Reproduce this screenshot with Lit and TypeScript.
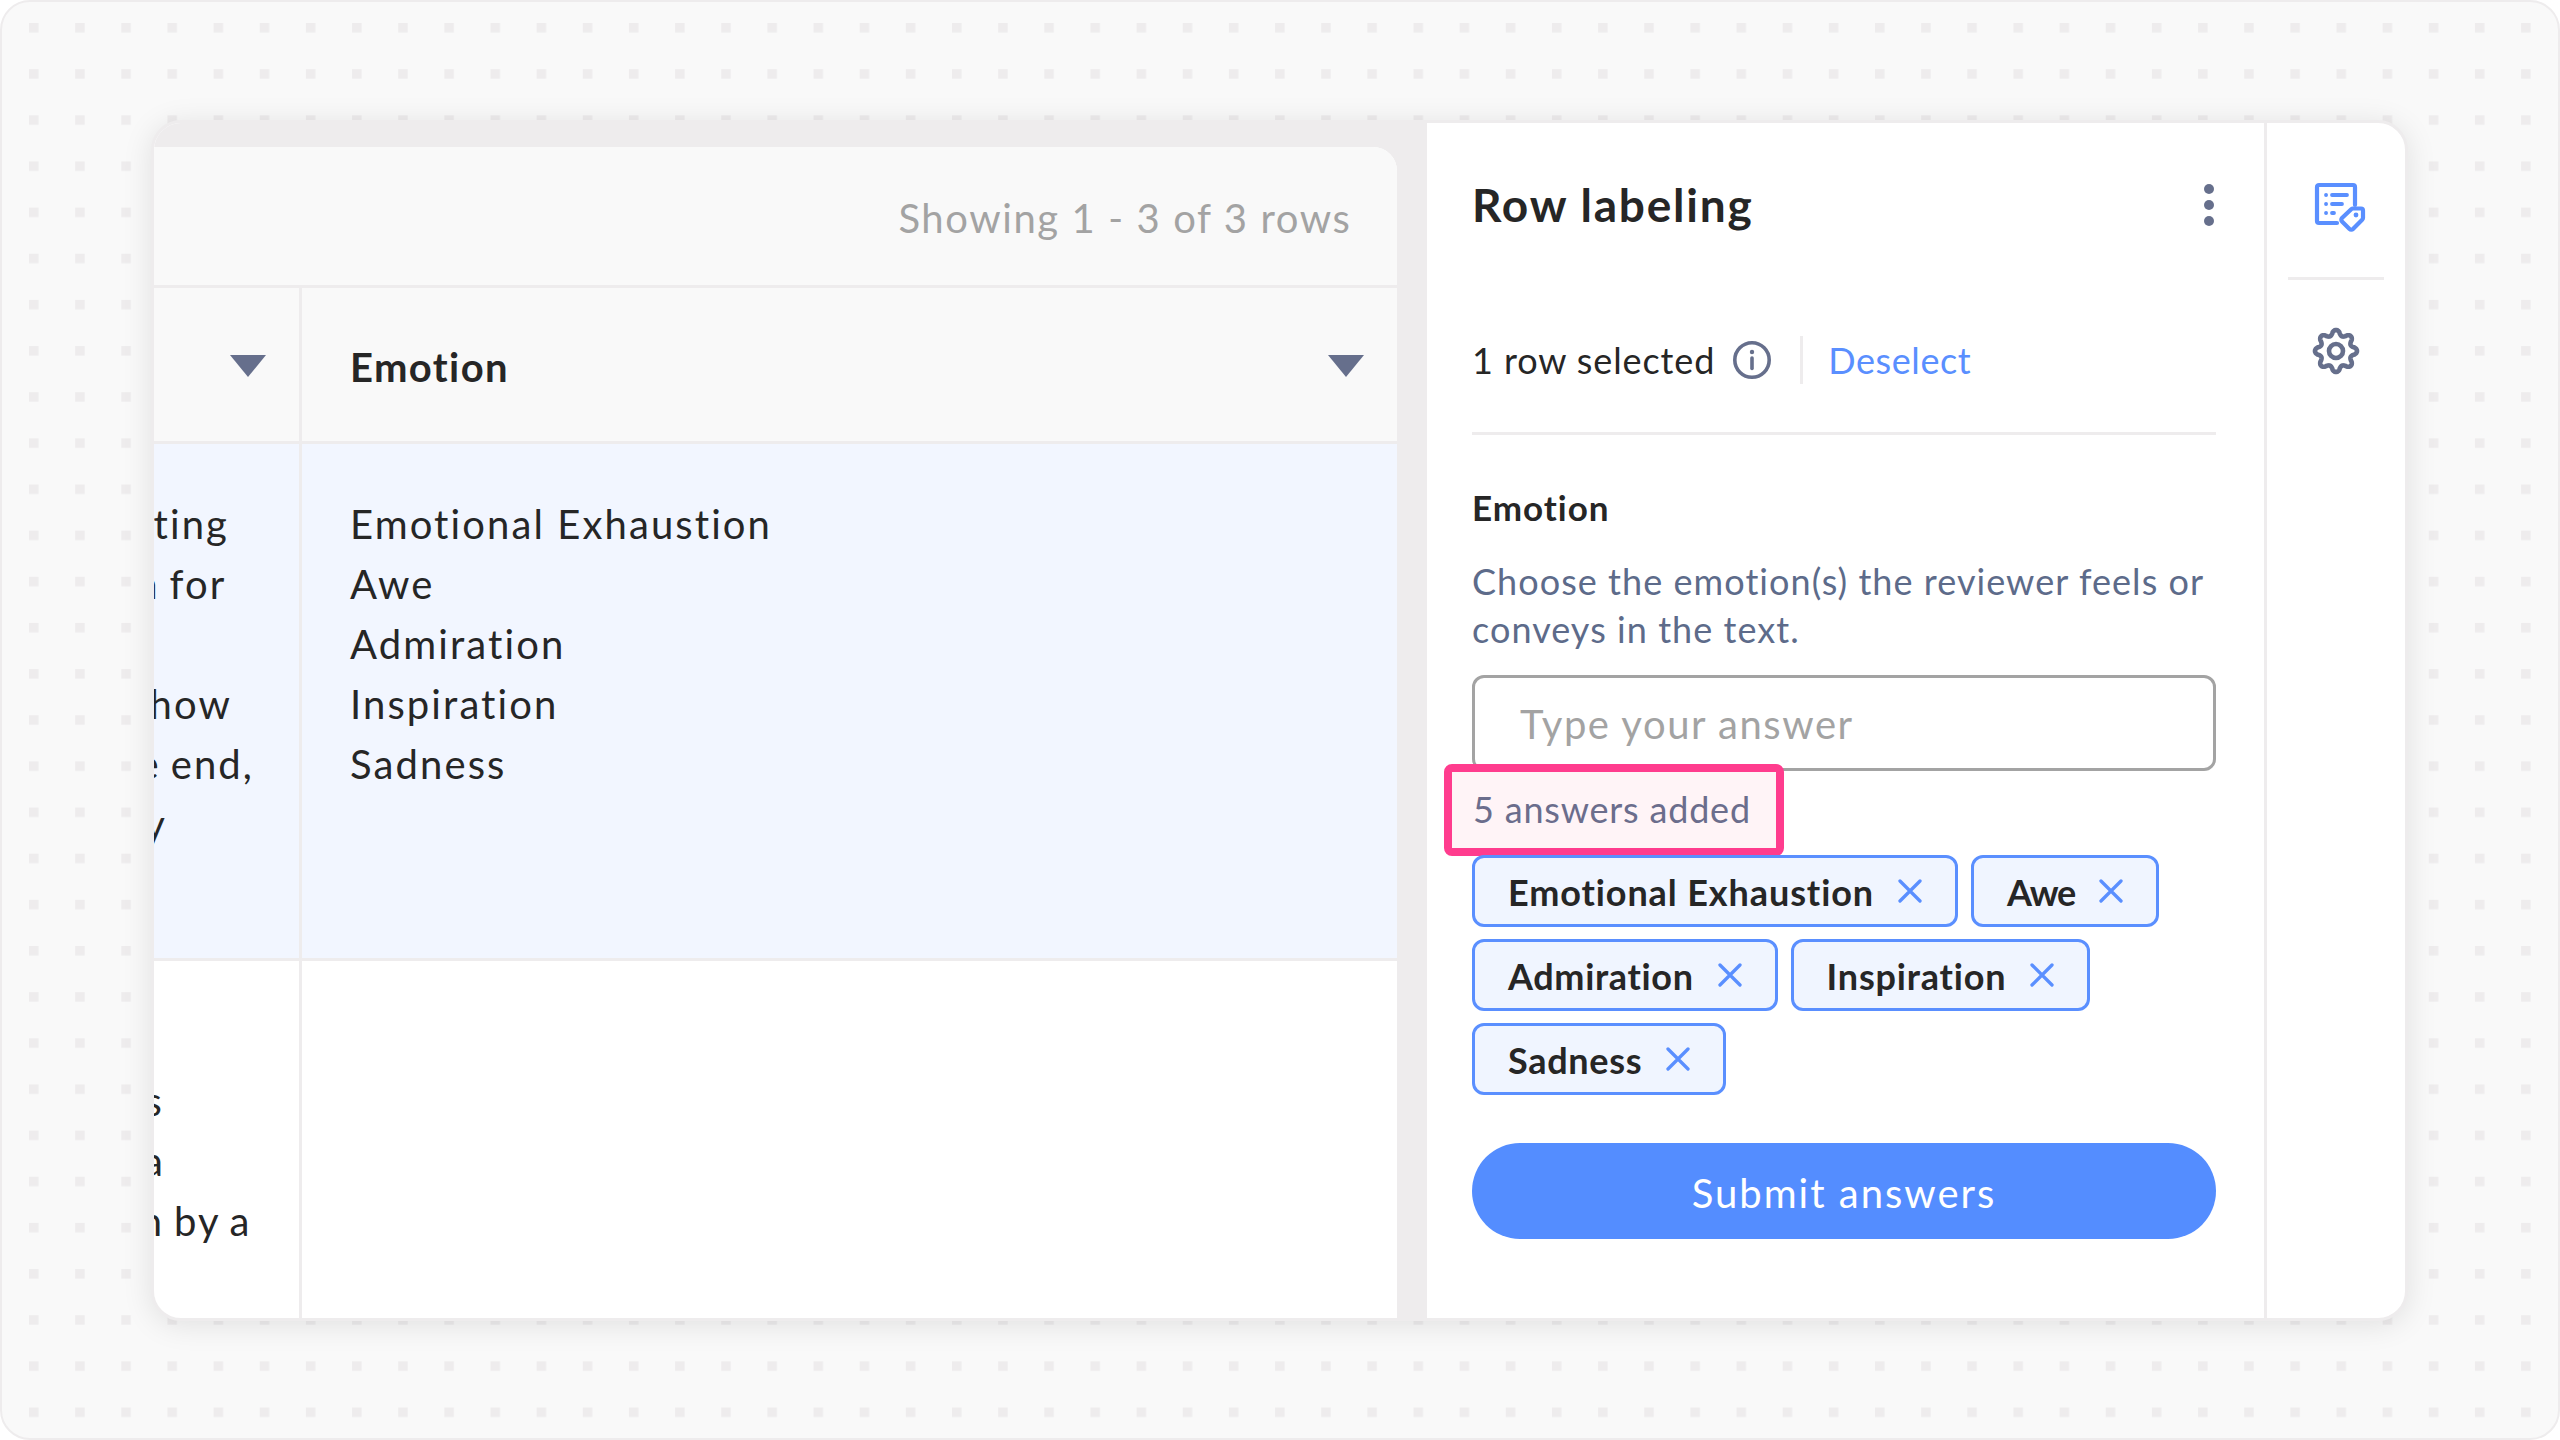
import { LitElement, html, css } from "lit";
import { customElement } from "lit/decorators.js";

const gearPath = (() => {
  const pts: string[] = [];
  const n = 240;
  for (let i = 0; i < n; i++) {
    const t = (i / n) * Math.PI * 2;
    const c = Math.cos(8 * t);
    const s = Math.sign(c) * Math.pow(Math.abs(c), 0.75);
    const r = 18.4 + 2.6 * s;
    pts.push(`${(30 + r * Math.sin(t)).toFixed(2)} ${(30 - r * Math.cos(t)).toFixed(2)}`);
  }
  return "M" + pts.join("L") + "Z";
})();

const firstColumn = [
  { text: "rating", inset: 70 },
  { text: "on for", inset: 72.5 },
  { text: "", inset: 0 },
  { text: "how", inset: 67 },
  { text: "the end,", inset: 45 },
  { text: "very", inset: 132 },
];
const secondRow = [
  { text: "", inset: 0 },
  { text: "was", inset: 135 },
  { text: "a", inset: 134 },
  { text: "shown by a", inset: 47.5 },
];
const emotions = ["Emotional Exhaustion", "Awe", "Admiration", "Inspiration", "Sadness"];
const chips = [
  { text: "Emotional Exhaustion", tracking: 0.9 },
  { text: "Awe", tracking: -1.2 },
  { text: "Admiration", tracking: 0.65 },
  { text: "Inspiration", tracking: 0.8 },
  { text: "Sadness", tracking: 0.7 },
];

@customElement("app-root")
export class AppRoot extends LitElement {
  static styles = css`
    :host {
      display: block;
      width: 2560px;
      height: 1440px;
      font-family: "Lato", "Noto Sans", sans-serif;
      color: #262626;
      background: #fff;
    }
    * { box-sizing: border-box; }
    .frame {
      position: relative;
      width: 2560px;
      height: 1440px;
      border: 2px solid #eeeced;
      border-radius: 30px;
      background: #f9f9f9;
      padding: 118px 150px 117px 149px;
      overflow: hidden;
    }
    .dots { position: absolute; left: -2px; top: -2px; width: 2560px; height: 1440px; }
    .card {
      position: relative;
      height: 100%;
      display: flex;
      border: 3px solid #eeeced;
      border-radius: 30px;
      background: #fff;
      overflow: hidden;
      box-shadow: 0 4px 30px rgba(0, 0, 0, 0.1);
    }
    .left {
      width: 1273px;
      flex: none;
      background: #eeeced;
      padding: 24px 30px 0 0;
    }
    .table {
      height: 100%;
      background: #fff;
      border-top-right-radius: 24px;
      overflow: hidden;
      display: flex;
      flex-direction: column;
    }
    .bar {
      height: 141px;
      flex: none;
      background: #f9f9f9;
      border-bottom: 3px solid #eeeced;
      display: flex;
      justify-content: flex-end;
      align-items: center;
      padding: 3px 45.5px 0 0;
      font-size: 40px;
      letter-spacing: 1.6px;
      color: #a3a3a3;
    }
    .row { display: flex; flex: none; border-bottom: 3px solid #eeeced; }
    .row.head { height: 156px; background: #f9f9f9; }
    .row.sel { height: 517px; background: #f2f6ff; }
    .row.last { flex: 1; border-bottom: 0; }
    .c1 {
      width: 148px;
      flex: none;
      border-right: 3px solid #eeeced;
      overflow: hidden;
    }
    .c2 { flex: 1; min-width: 0; }
    .head .c1, .head .c2 {
      display: flex;
      align-items: center;
      justify-content: flex-end;
      padding-right: 33px;
    }
    .head .c2 { justify-content: space-between; padding-left: 48px; }
    .head .name { font-size: 40px; font-weight: 700; letter-spacing: 1.4px; margin-top: 4px; }
    .tri {
      width: 0;
      height: 0;
      margin-top: 3px;
      border-left: 18px solid transparent;
      border-right: 18px solid transparent;
      border-top: 22px solid #666f8c;
    }
    .body { padding-top: 50px; font-size: 40px; line-height: 60px; letter-spacing: 2.1px; }
    .sel .c2, .last .c2 { padding-left: 48px; }
    .clip { display: flex; justify-content: flex-end; white-space: nowrap; height: 60px; word-spacing: -2.5px; }
    .clip span { flex: none; }
    .panel {
      width: 837px;
      flex: none;
      padding: 52px 48px 0 45px;
      display: flex;
      flex-direction: column;
    }
    .title-row { display: flex; justify-content: space-between; align-items: center; height: 60px; }
    h1 { margin: 0; font-size: 46px; line-height: 60px; font-weight: 700; letter-spacing: 1.8px; }
    .kebab { display: flex; flex-direction: column; gap: 6px; margin-right: 2px; }
    .kebab i { display: block; width: 10px; height: 10px; border-radius: 50%; background: #666f8c; }
    .selected { margin-top: 101px; height: 48px; display: flex; align-items: center; font-size: 36px; letter-spacing: 0.9px; }
    .selected svg { width: 38px; height: 38px; margin-left: 18px; flex: none; }
    .vr { width: 3px; height: 48px; background: #eeeced; margin: 0 25px 0 29px; flex: none; }
    .link { color: #5a8fff; letter-spacing: 0.6px; }
    .rule { margin-top: 48px; height: 3px; background: #eeeced; flex: none; }
    h2 { margin: 48px 0 0; font-size: 35px; line-height: 48px; font-weight: 700; letter-spacing: 1px; }
    .desc { margin: 26px 0 0; font-size: 36px; line-height: 48px; letter-spacing: 1.05px; color: #5d6b8a; }
    .input {
      margin-top: 22px;
      height: 96px;
      flex: none;
      width: 100%;
      border: 3px solid #a3a3a3;
      border-radius: 12px;
      padding: 2px 0 0 45px;
      font: 400 40px "Lato", sans-serif;
      letter-spacing: 1.55px;
      background: #fff;
      outline: none;
    }
    .input::placeholder { color: #a3a3a3; opacity: 1; }
    .added {
      position: relative;
      margin: -7px 0 0 -28px;
      width: 340px;
      height: 92px;
      flex: none;
      border: 8px solid #ff3c8e;
      border-radius: 8px;
      background: #fff4f7;
      display: flex;
      align-items: center;
      padding: 0 0 2px 21px;
      font-size: 36px;
      letter-spacing: 0.8px;
      color: #6b6d8c;
    }
    .chips { position: relative; margin-top: -1px; display: flex; flex-wrap: wrap; gap: 12px 13px; }
    .chip {
      height: 72px;
      display: flex;
      align-items: center;
      gap: 24px;
      padding: 0 33px;
      border: 3px solid #5a8fff;
      border-radius: 12px;
      background: #f0f5ff;
      font-size: 36px;
      font-weight: 700;
    }
    .chip span { padding-top: 2px; }
    .chip svg { width: 24px; height: 24px; flex: none; }
    .submit {
      margin-top: 48px;
      height: 96px;
      flex: none;
      border: 0;
      border-radius: 48px;
      padding: 3px 0 0;
      background: #548dff;
      color: #fff;
      font: 400 40px "Lato", sans-serif;
      letter-spacing: 2px;
    }
    .side {
      flex: 1;
      border-left: 3px solid #eeeced;
      display: flex;
      flex-direction: column;
      align-items: center;
      padding-top: 55px;
    }
    .side svg { width: 60px; height: 60px; flex: none; }
    .side hr { width: 96px; height: 3px; border: 0; background: #eeeced; margin: 39px 0 41px; flex: none; }
  `;

  private clipLines(lines: { text: string; inset: number }[]) {
    return lines.map(
      (l) => html`<div class="clip" style="padding-right:${l.inset}px"><span>${l.text}</span></div>`
    );
  }

  render() {
    return html`
      <div class="frame">
        <svg class="dots" aria-hidden="true">
          <defs>
            <pattern id="dot" x="29" y="23" width="46.15" height="46.15" patternUnits="userSpaceOnUse">
              <rect width="9.5" height="9.5" fill="#eeeced"></rect>
            </pattern>
          </defs>
          <rect width="2560" height="1440" fill="url(#dot)"></rect>
        </svg>
        <div class="card">
          <div class="left">
            <div class="table">
              <div class="bar">Showing 1 - 3 of 3 rows</div>
              <div class="row head">
                <div class="c1"><span class="tri"></span></div>
                <div class="c2"><span class="name">Emotion</span><span class="tri"></span></div>
              </div>
              <div class="row sel">
                <div class="c1 body">${this.clipLines(firstColumn)}</div>
                <div class="c2 body">${emotions.map((e) => html`<div>${e}</div>`)}</div>
              </div>
              <div class="row last">
                <div class="c1 body">${this.clipLines(secondRow)}</div>
                <div class="c2"></div>
              </div>
            </div>
          </div>
          <div class="panel">
            <div class="title-row">
              <h1>Row labeling</h1>
              <div class="kebab"><i></i><i></i><i></i></div>
            </div>
            <div class="selected">
              <span>1 row selected</span>
              <svg viewBox="0 0 38 38" fill="none" stroke="#666f8c">
                <circle cx="19" cy="19" r="17.2" stroke-width="3.6"></circle>
                <path d="M19 17v10.5" stroke-width="3.6" stroke-linecap="round"></path>
                <circle cx="19" cy="11" r="2.2" fill="#666f8c" stroke="none"></circle>
              </svg>
              <span class="vr"></span>
              <span class="link">Deselect</span>
            </div>
            <div class="rule"></div>
            <h2>Emotion</h2>
            <p class="desc">Choose the emotion(s) the reviewer feels or conveys in the text.</p>
            <input class="input" placeholder="Type your answer" />
            <div class="added">5 answers added</div>
            <div class="chips">
              ${chips.map(
                (c) => html`<div class="chip">
                  <span style="letter-spacing:${c.tracking}px">${c.text}</span>
                  <svg viewBox="0 0 24 24" fill="none" stroke="#5a8fff" stroke-width="3.3" stroke-linecap="round">
                    <path d="M2 2l20 20M22 2L2 22"></path>
                  </svg>
                </div>`
              )}
            </div>
            <button class="submit">Submit answers</button>
          </div>
          <div class="side">
            <svg viewBox="0 0 60 60" fill="none" stroke="#5a8fff" stroke-linecap="round" stroke-linejoin="round">
              <path d="M31 45H13a2 2 0 0 1-2-2V9a2 2 0 0 1 2-2H47a2 2 0 0 1 2 2V27" stroke-width="4.2"></path>
              <path d="M20 17h.1M20 26h.1M20 35h.1M26 17h15M26 26h10M26 35h2" stroke-width="3.8"></path>
              <path d="M47 30.5H55a2 2 0 0 1 2 2V40a2 2 0 0 1-.6 1.4L47 51a2.5 2.5 0 0 1-3.5 0L36 43.5a2.5 2.5 0 0 1 0-3.5L45.5 31a2 2 0 0 1 1.5-.5z" stroke-width="4.2"></path>
              <circle cx="50" cy="37" r="2.4" fill="#5a8fff" stroke="none"></circle>
            </svg>
            <hr />
            <svg viewBox="0 0 60 60" fill="none" stroke="#666f8c" stroke-width="4.6" stroke-linejoin="round">
              <path d=${gearPath}></path>
              <circle cx="30" cy="30" r="7"></circle>
            </svg>
          </div>
        </div>
      </div>
    `;
  }
}
